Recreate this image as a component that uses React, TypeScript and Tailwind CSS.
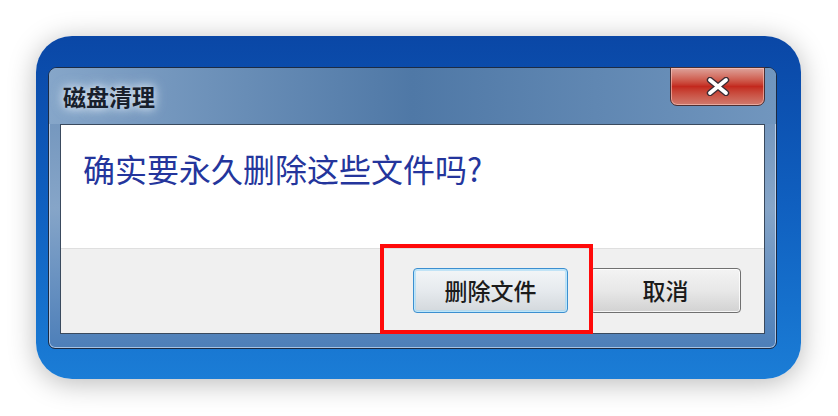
import React from 'react';

const cjk = '"Noto Sans CJK SC", "Noto Sans", sans-serif';

function CloseGlyph() {
  return (
    <svg width="26" height="19" viewBox="0 0 26 19" className="block">
      <path d="M5 3 L21 16 M21 3 L5 16" stroke="#3a2b33" strokeWidth="6.4" strokeLinecap="round" />
      <path d="M5 3 L21 16 M21 3 L5 16" stroke="#ffffff" strokeWidth="3.8" strokeLinecap="round" />
    </svg>
  );
}

function WinButton({ label, focused }: { label: string; focused?: boolean }) {
  return (
    <button
      className={
        focused
          ? 'h-[45px] w-[155px] rounded-[4px] border border-[#3c8fd0] bg-gradient-to-b from-[#f3f6f8] via-[#e6eaee] to-[#d3d8dc] shadow-[inset_0_0_0_1px_#bde6fa,inset_0_0_0_2px_rgba(160,215,245,0.6)] flex items-center justify-center'
          : 'h-[45px] w-[151px] rounded-[4px] border border-[#707070] bg-gradient-to-b from-[#f3f3f3] via-[#e8e8e8] to-[#d2d2d2] shadow-[inset_0_0_0_1px_rgba(255,255,255,0.8)] flex items-center justify-center'
      }
    >
      <span className="text-[23px] font-medium leading-none text-[#1b1b1b]" style={{ fontFamily: cjk }}>
        {label}
      </span>
    </button>
  );
}

export default function App() {
  return (
    <div className="w-[838px] h-[416px] bg-white pl-[36px] pt-[36px]">
      {/* blue desktop card */}
      <div className="w-[765px] h-[343px] rounded-[36px] bg-gradient-to-b from-[#0a47a6] via-[#1060c0] to-[#1b7dd6] shadow-[0_4px_28px_rgba(0,0,0,0.28)] pl-[12px] pt-[31px]">
        {/* window */}
        <div className="relative w-[729px] h-[282px] rounded-t-[9px] rounded-b-[7px] border border-[#1c2b44] bg-gradient-to-b from-[#6b8fb8] via-[#86a5c8] to-[#4d7fb9] shadow-[inset_0_0_0_1px_rgba(230,240,255,0.6)] px-[11px] pb-[14px] flex flex-col">
          {/* title bar */}
          <div className="h-[56px] -mx-[11px] px-[14px] flex items-center rounded-t-[8px] bg-gradient-to-r from-[#86a6c9] via-[#4f78a6] to-[#7196be]">
            <span
              className="text-[23px] font-semibold text-[#18202c] [text-shadow:0_0_8px_rgba(230,240,250,0.95),0_0_14px_rgba(230,240,250,0.7)]"
              style={{ fontFamily: cjk }}
            >
              磁盘清理
            </span>
          </div>

          {/* close button */}
          <div className="absolute right-[11px] -top-px w-[95px] h-[39px] rounded-b-[7px] border border-[#4a2f33] bg-gradient-to-b from-[#dca39c] via-[#c3281d] to-[#d07a6e] shadow-[inset_0_0_0_1px_rgba(255,210,200,0.55)] flex items-center justify-center">
            <CloseGlyph />
          </div>

          {/* client area */}
          <div className="relative flex-1 border border-[#3a4a5e] bg-white flex flex-col">
            <div className="h-[123px] pl-[22px] pt-[24px]">
              <p className="text-[32px] leading-[38px] text-[#24359c]" style={{ fontFamily: cjk }}>
                确实要永久删除这些文件吗?
              </p>
            </div>
            <div className="flex-1 bg-[#f0f0f0] border-t border-[#dfdfdf] flex justify-end items-start pt-[19px] pr-[23px] gap-[22px]">
              <WinButton label="删除文件" focused />
              <WinButton label="取消" />
            </div>

            {/* red highlight */}
            <div className="absolute left-[319px] top-[119px] w-[213px] h-[90px] border-[4px] border-[#ff0a0a]" />
          </div>
        </div>
      </div>
    </div>
  );
}
